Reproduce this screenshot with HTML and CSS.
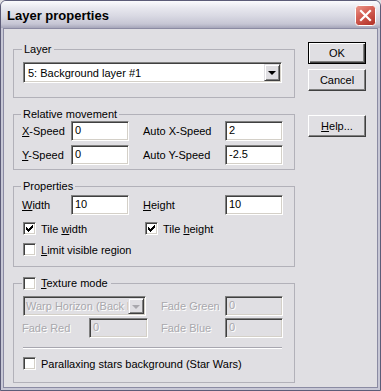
FILE: index.html
```html
<!DOCTYPE html>
<html lang="en">
<head>
	<meta charset="UTF-8">
	<title>Layer properties</title>
	<link rel="stylesheet" href="styles.css">
</head>
<body>
	<div class="window">
		<div class="titlebar">
			<span class="title">Layer properties</span>
			<span class="close">
				<svg width="21" height="21" viewBox="0 0 21 21">
					<defs>
						<linearGradient id="red" x1="0" y1="0" x2="0.6" y2="1">
							<stop offset="0" stop-color="#eb9a8c"/>
							<stop offset="0.45" stop-color="#d7655a"/>
							<stop offset="1" stop-color="#b8392f"/>
						</linearGradient>
					</defs>
					<rect x="0.5" y="0.5" width="20" height="20" rx="3" fill="url(#red)" stroke="#fff"/>
					<path d="M6 6 L15 15 M15 6 L6 15" stroke="#fff" stroke-width="2.2" stroke-linecap="square"/>
				</svg>
			</span>
		</div>
		<div class="client">
			<div class="main">
				<fieldset class="group g-layer">
					<legend>Layer</legend>
					<div class="combo">
						<span class="combo-text">5: Background layer #1</span>
						<span class="combo-btn"><i class="arrow"></i></span>
					</div>
				</fieldset>

				<fieldset class="group g-move">
					<legend>Relative movement</legend>
					<div class="grid grid-a">
						<label><u>X</u>-Speed</label>
						<span class="edit">0</span>
						<label class="far">Auto X-Speed</label>
						<span class="edit">2</span>
						<label><u>Y</u>-Speed</label>
						<span class="edit">0</span>
						<label class="far">Auto Y-Speed</label>
						<span class="edit">-2.5</span>
					</div>
				</fieldset>

				<fieldset class="group g-props">
					<legend>Properties</legend>
					<div class="grid grid-a">
						<label><u>W</u>idth</label>
						<span class="edit">10</span>
						<label class="far"><u>H</u>eight</label>
						<span class="edit">10</span>
					</div>
					<div class="checks">
						<div class="check wide"><span class="box"><svg width="9" height="9" viewBox="0 0 9 9"><path d="M1 3v3h1v1h1v1h1v-1h1v-1h1v-1h1v-1h1v-3h-1v1h-1v1h-1v1h-1v1h-1v-1h-1v-1z" fill="#000"/></svg></span><span>Tile <u>w</u>idth</span></div>
						<div class="check"><span class="box"><svg width="9" height="9" viewBox="0 0 9 9"><path d="M1 3v3h1v1h1v1h1v-1h1v-1h1v-1h1v-1h1v-3h-1v1h-1v1h-1v1h-1v1h-1v-1h-1v-1z" fill="#000"/></svg></span><span>Tile <u>h</u>eight</span></div>
					</div>
					<div class="check row2"><span class="box"></span><span><u>L</u>imit visible region</span></div>
				</fieldset>

				<fieldset class="group g-texture">
					<legend><span class="check"><span class="box"></span><span><u>T</u>exture mode</span></span></legend>
					<div class="grid grid-b">
						<div class="combo disabled span2">
							<span class="combo-text">Warp Horizon (Back l</span>
							<span class="combo-btn"><i class="arrow"></i></span>
						</div>
						<label class="off far">Fade Green</label>
						<span class="edit off">0</span>
						<label class="off">Fade Red</label>
						<span class="edit off">0</span>
						<label class="off far">Fade Blue</label>
						<span class="edit off">0</span>
					</div>
					<div class="sep"></div>
					<div class="check"><span class="box"></span><span>Parallaxing stars background (Star Wars)</span></div>
				</fieldset>
			</div>

			<div class="buttons">
				<button class="btn default">OK</button>
				<button class="btn">Cancel</button>
				<button class="btn help"><u>H</u>elp...</button>
			</div>
		</div>
	</div>
</body>
</html>
```

FILE: styles.css
```css
* {
	margin: 0;
	padding: 0;
	box-sizing: border-box;
}
body {
	background: #e0dfe3;
	font-family: "Liberation Sans", Arial, sans-serif;
	font-size: 11px;
	color: #000;
}
.window {
	width: 381px;
	height: 391px;
	border: 1px solid #5c5c78;
	border-radius: 6px 6px 0 0;
	background: #c7c7d5;
	overflow: hidden;
	display: flex;
	flex-direction: column;
}
.titlebar {
	height: 27px;
	flex: none;
	display: flex;
	justify-content: space-between;
	align-items: flex-start;
	padding: 0 4px 0 6px;
	background: linear-gradient(#fbfbfd 0%, #e8e8ef 25%, #d9d9e3 55%, #c6c6d4 85%, #a6a6ba 100%);
}
.title {
	font-weight: bold;
	font-size: 13px;
	line-height: 27px;
	padding-top: 1px;
	color: #000;
}
.close {
	margin-top: 4px;
	height: 21px;
}
.client {
	flex: 1;
	margin: 0 2px 2px;
	border: 1px solid #8b8ba3;
	background: #e0dfe3;
	display: flex;
	padding: 13px 0 0 9px;
	overflow: hidden;
}
.main {
	width: 282px;
	margin-top: 1px;
}
.group {
	border: 1px solid #b2b1b9;
	min-width: 0;
	margin-bottom: 10px;
}
.group legend {
	margin-left: -1px;
	padding: 0 2px;
	line-height: 13px;
	height: 13px;
}
.g-layer {
	padding: 6px 12px 14px 9px;
}
.g-move {
	padding: 0 11px 4px 8px;
}
.g-props {
	padding: 2px 11px 8px 8px;
}
.g-texture {
	padding: 6px 11px 10px 8px;
}
.g-texture legend {
	padding: 0 3px 0 1px;
	margin-left: 0;
}

/* edit fields */
.edit {
	display: block;
	height: 20px;
	line-height: 16px;
	padding: 0 3px;
	background: #fff;
	border: 1px solid;
	border-color: #808080 #fff #fff #808080;
	box-shadow: inset 1px 1px #404040, inset -1px -1px #d4d0c8;
}
.edit.off {
	background: #e0dfe3;
}
.off {
	color: #a9a8ad;
	text-shadow: 1px 1px #fff;
}

.grid {
	display: grid;
	align-items: center;
	row-gap: 4px;
}
.grid-a {
	grid-template-columns: 49px 58px 96px 58px;
}
.grid-b {
	grid-template-columns: 67px 59px 77px 58px;
	row-gap: 2px;
}
.grid .far {
	padding-left: 14px;
}
.grid-b .far {
	padding-left: 13px;
}
.span2 {
	grid-column: 1 / 3;
	margin-left: 1px;
	margin-right: 2px;
}

/* combo box */
.combo {
	height: 21px;
	display: flex;
	align-items: center;
	background: #fff;
	border: 1px solid;
	border-color: #808080 #fff #fff #808080;
	box-shadow: inset 1px 1px #404040, inset -1px -1px #d4d0c8;
	padding: 1px;
}
.combo-text {
	flex: 1;
	padding-left: 3px;
	white-space: nowrap;
	overflow: hidden;
}
.combo-btn {
	width: 16px;
	height: 17px;
	display: flex;
	align-items: center;
	justify-content: center;
	background: #e0dfe3;
	border: 1px solid;
	border-color: #e0dfe3 #404040 #404040 #e0dfe3;
	box-shadow: inset 1px 1px #fff, inset -1px -1px #808080;
}
.arrow {
	width: 0;
	height: 0;
	border-left: 4px solid transparent;
	border-right: 4px solid transparent;
	border-top: 4px solid #000;
	margin-top: 1px;
}
.combo.disabled {
	height: 20px;
	background: #e0dfe3;
}
.combo.disabled .combo-text {
	color: #a9a8ad;
	text-shadow: 1px 1px #fff;
	padding-left: 1px;
}
.combo.disabled .combo-btn {
	height: 16px;
}
.combo.disabled .arrow {
	border-top-color: #a9a8ad;
}

/* check boxes */
.checks {
	display: flex;
	margin-top: 5px;
}
.check {
	display: flex;
	align-items: center;
	height: 17px;
	margin-left: 1px;
}
.check.wide {
	width: 121px;
}
.row2 {
	margin-top: 4px;
}
.box {
	width: 13px;
	height: 13px;
	flex: none;
	margin-right: 5px;
	background: #fff;
	border: 1px solid;
	border-color: #808080 #fff #fff #808080;
	box-shadow: inset 1px 1px #404040, inset -1px -1px #d4d0c8;
	display: flex;
	align-items: center;
	justify-content: center;
}
.g-texture legend .check {
	height: 13px;
	margin-left: 0;
}
.sep {
	height: 2px;
	margin: 9px 1px 6px 1px;
	border-top: 1px solid #a8a7b0;
	border-bottom: 1px solid #fff;
}

/* push buttons */
.buttons {
	display: flex;
	flex-direction: column;
	margin-left: 13px;
	width: 58px;
}
.btn {
	height: 22px;
	width: 58px;
	font: inherit;
	color: #000;
	background: #e0dfe3;
	border: 1px solid;
	border-color: #fff #404040 #404040 #fff;
	box-shadow: inset -1px -1px #808080;
	margin-bottom: 5px;
}
.btn.default {
	border: 1px solid #000;
	box-shadow: inset 1px 1px #fff, inset -1px -1px #404040, inset -2px -2px #808080;
}
.btn.help {
	margin-top: 19px;
}
```
